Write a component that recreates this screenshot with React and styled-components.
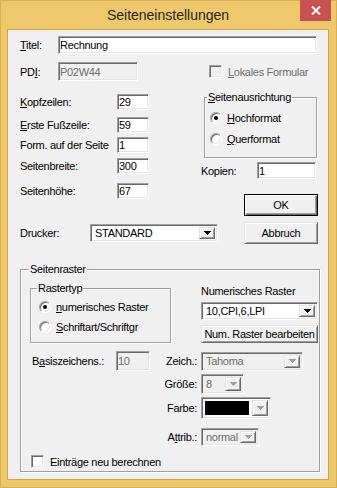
import React from "react";
import styled, { createGlobalStyle, css } from "styled-components";

const GlobalStyle = createGlobalStyle`
  html, body {
    margin: 0;
    padding: 0;
    background: #ffffff;
  }
  body {
    font-family: "Liberation Sans", Arial, sans-serif;
    font-size: 11px;
  }
`;

// classic 3D edges
const sunken = css`
  box-sizing: border-box;
  border: 1px solid;
  border-color: #a0a0a0 #ffffff #ffffff #a0a0a0;
  box-shadow: inset 1px 1px 0 #696969, inset -1px -1px 0 #e3e3e3;
`;

const raised = css`
  box-sizing: border-box;
  border: 1px solid;
  border-color: #e3e3e3 #696969 #696969 #e3e3e3;
  box-shadow: inset 1px 1px 0 #ffffff, inset -1px -1px 0 #a0a0a0;
`;

const Frame = styled.div`
  width: 337px;
  height: 488px;
  box-sizing: border-box;
  background: #efc86b;
  border: 1px solid #d7b055;
  padding: 0 7px 7px 6px;
  display: flex;
  flex-direction: column;
`;

const TitleBar = styled.div`
  position: relative;
  flex: none;
  height: 28px;
  display: flex;
  align-items: center;
  justify-content: center;
  font-size: 14px;
  color: #262626;
`;

const CloseButton = styled.div`
  position: absolute;
  top: -1px;
  right: -2px;
  width: 31px;
  height: 21px;
  background: #c75050;
  display: flex;
  align-items: center;
  justify-content: center;
`;

const Client = styled.div`
  flex: 1;
  box-sizing: border-box;
  border: 1px solid #cda44c;
  background: #f0f0f0;
  padding: 6px 11px 0 12px;
  display: flex;
  flex-direction: column;
  color: #000;
  letter-spacing: -0.3px;
  overflow: hidden;
`;

const Row = styled.div`
  display: flex;
  align-items: center;
  height: ${(p) => p.$h || 16}px;
  margin-top: ${(p) => p.$mt || 0}px;
  margin-left: ${(p) => p.$ml || 0}px;
`;

const Label = styled.span`
  flex: none;
  width: ${(p) => (p.$w ? `${p.$w}px` : "auto")};
  white-space: nowrap;
  color: ${(p) => (p.$disabled ? "#6d6d6d" : "#000")};
  margin-left: ${(p) => p.$ml || 0}px;
`;

const Field = styled.input`
  ${sunken};
  flex: ${(p) => (p.$grow ? 1 : "none")};
  width: ${(p) => (p.$w ? `${p.$w}px` : "auto")};
  height: ${(p) => p.$h || 16}px;
  min-width: 0;
  margin: 0;
  padding: 0 0 0 1px;
  font: inherit;
  letter-spacing: inherit;
  color: #000;
  background: #ffffff;
  outline: none;

  &:disabled {
    color: #6d6d6d;
    background: #f0f0f0;
  }
`;

const Combo = styled.div`
  ${sunken};
  flex: none;
  width: ${(p) => p.$w}px;
  height: ${(p) => p.$h || 18}px;
  padding: 2px;
  display: flex;
  align-items: stretch;
  background: ${(p) => (p.$disabled ? "#f0f0f0" : "#ffffff")};
  color: ${(p) => (p.$disabled ? "#6d6d6d" : "#000")};
`;

const ComboText = styled.span`
  flex: 1;
  display: flex;
  align-items: center;
  padding-left: 2px;
  white-space: nowrap;
  overflow: hidden;
`;

const Swatch = styled.span`
  flex: 1;
  margin: 1px 3px 1px 1px;
  background: ${(p) => p.$color};
`;

const DropButton = styled.span`
  ${raised};
  flex: none;
  width: 16px;
  background: #f0f0f0;
  display: flex;
  align-items: center;
  justify-content: center;
`;

const Arrow = ({ disabled }) => (
  <svg width="7" height="4" viewBox="0 0 7 4" shapeRendering="crispEdges">
    <path
      d="M0 0h7v1H0zM1 1h5v1H1zM2 2h3v1H2zM3 3h1v1H3z"
      fill={disabled ? "#a0a0a0" : "#000"}
    />
  </svg>
);

const PushButton = styled.button`
  ${raised};
  flex: none;
  width: ${(p) => p.$w}px;
  height: ${(p) => p.$h || 22}px;
  margin: ${(p) => p.$mt || 0}px 0 0 ${(p) => p.$ml || 0}px;
  padding: 0;
  font: inherit;
  letter-spacing: inherit;
  white-space: nowrap;
  color: #000;
  background: #f0f0f0;

  ${(p) =>
    p.$default &&
    css`
      border-color: #000;
      box-shadow: inset 1px 1px 0 #ffffff, inset -1px -1px 0 #696969,
        inset -2px -2px 0 #a0a0a0;
    `}
`;

const CheckBox = styled.span`
  ${sunken};
  flex: none;
  width: 13px;
  height: 13px;
  background: ${(p) => (p.$disabled ? "#f0f0f0" : "#ffffff")};
`;

const RadioCircle = styled.span`
  ${sunken};
  flex: none;
  position: relative;
  width: 12px;
  height: 12px;
  border-radius: 50%;
  background: #ffffff;

  &::after {
    content: "";
    display: ${(p) => (p.$checked ? "block" : "none")};
    position: absolute;
    left: 3px;
    top: 3px;
    width: 4px;
    height: 4px;
    border-radius: 50%;
    background: #000;
  }
`;

const RadioRow = styled.div`
  display: flex;
  align-items: center;
  gap: 5px;
  height: 14px;
  margin-top: ${(p) => p.$mt || 0}px;
  white-space: nowrap;
`;

const Group = styled.div`
  position: relative;
  box-sizing: border-box;
  flex: none;
  width: ${(p) => p.$w}px;
  height: ${(p) => p.$h}px;
  margin: ${(p) => p.$mt || 0}px 0 0 ${(p) => p.$ml || 0}px;
  padding: ${(p) => p.$pad || "0"};
  border: 1px solid #a0a0a0;
  box-shadow: inset 1px 1px 0 #ffffff, 1px 1px 0 #ffffff;
`;

const GroupTitle = styled.span`
  position: absolute;
  top: -7px;
  left: ${(p) => p.$left}px;
  padding: 0 1px;
  line-height: 13px;
  background: #f0f0f0;
  white-space: nowrap;
`;

const MidGrid = styled.div`
  display: grid;
  grid-template-columns: 181px 1fr;
  margin-top: 9px;
`;

const Column = styled.div`
  display: flex;
  flex-direction: column;
  padding-top: ${(p) => p.$pt || 0}px;
`;

const TopRaster = styled.div`
  display: flex;
  margin-top: 15px;
`;

const RasterStack = styled.div`
  display: flex;
  flex-direction: column;
  margin-left: 30px;
`;

const StackLabel = styled.span`
  line-height: 13px;
  height: 13px;
  margin-bottom: 4px;
`;

const FontRow = styled.div`
  display: grid;
  grid-template-columns: 176px auto;
  column-gap: 4px;
  align-items: center;
  height: ${(p) => p.$h}px;
  margin-top: ${(p) => p.$mt}px;
`;

const FontLeft = styled.div`
  display: flex;
  align-items: center;
  padding-left: 11px;
`;

const RightLabel = styled.span`
  margin-left: auto;
  white-space: nowrap;
`;

const ComboBox = ({ w, h, value, disabled }) => (
  <Combo $w={w} $h={h} $disabled={disabled}>
    <ComboText>{value}</ComboText>
    <DropButton>
      <Arrow disabled={disabled} />
    </DropButton>
  </Combo>
);

const leftRows = [
  { label: <><u>K</u>opfzeilen:</>, value: "29", mt: 0 },
  { label: <><u>E</u>rste Fußzeile:</>, value: "59", mt: 7 },
  { label: "Form. auf der Seite", value: "1", mt: 4 },
  { label: "Seitenbreite:", value: "300", mt: 5 },
  { label: "Seitenhöhe:", value: "67", mt: 9 },
];

export default function App() {
  return (
    <>
      <GlobalStyle />
      <Frame>
        <TitleBar>
          Seiteneinstellungen
          <CloseButton>
            <svg width="10" height="9" viewBox="0 0 10 9">
              <path d="M1 0.5L9 8.5M9 0.5L1 8.5" stroke="#fff" strokeWidth="2" />
            </svg>
          </CloseButton>
        </TitleBar>

        <Client>
          <Row $h={18}>
            <Label $w={38}>
              <u>T</u>itel:
            </Label>
            <Field $grow $h={18} defaultValue="Rechnung" readOnly />
          </Row>

          <Row $h={19} $mt={8}>
            <Label $w={38}>
              PD<u>I</u>:
            </Label>
            <Field $w={80} $h={19} defaultValue="P02W44" disabled />
            <CheckBox $disabled style={{ marginLeft: 71 }} />
            <Label $disabled $ml={6}>
              <u>L</u>okales Formular
            </Label>
          </Row>

          <MidGrid>
            <Column $pt={4}>
              {leftRows.map((r, i) => (
                <Row key={i} $mt={r.mt}>
                  <Label $w={97}>{r.label}</Label>
                  <Field $w={32} defaultValue={r.value} readOnly />
                </Row>
              ))}
              <Row $h={18} $mt={25}>
                <Label $w={70}>Drucker:</Label>
                <ComboBox w={128} h={18} value="STANDARD" />
              </Row>
            </Column>

            <Column>
              <Group $w={113} $h={61} $mt={7} $ml={3} $pad="13px 0 0 5px">
                <GroupTitle $left={2}>
                  <u>S</u>eitenausrichtung
                </GroupTitle>
                <RadioRow>
                  <RadioCircle $checked />
                  <span>
                    <u>H</u>ochformat
                  </span>
                </RadioRow>
                <RadioRow $mt={7}>
                  <RadioCircle />
                  <span>
                    <u>Q</u>uerformat
                  </span>
                </RadioRow>
              </Group>
              <Row $h={17} $mt={4}>
                <Label $w={56}>Kopien:</Label>
                <Field $w={59} $h={17} defaultValue="1" readOnly />
              </Row>
              <PushButton $default $w={74} $mt={15} $ml={43}>
                OK
              </PushButton>
              <PushButton $w={74} $mt={6} $ml={43}>
                Abbruch
              </PushButton>
            </Column>
          </MidGrid>

          <Group $w={300} $h={203} $mt={25}>
            <GroupTitle $left={8}>Seitenraster</GroupTitle>

            <TopRaster>
              <Group $w={141} $h={55} $mt={3} $ml={9} $pad="11px 0 0 8px">
                <GroupTitle $left={6}>Rastertyp</GroupTitle>
                <RadioRow>
                  <RadioCircle $checked />
                  <span>
                    <u>n</u>umerisches Raster
                  </span>
                </RadioRow>
                <RadioRow $mt={6}>
                  <RadioCircle />
                  <span>
                    <u>S</u>chriftart/Schriftgr
                  </span>
                </RadioRow>
              </Group>
              <RasterStack>
                <StackLabel>Numerisches Raster</StackLabel>
                <ComboBox w={117} h={18} value="10,CPI,6,LPI" />
                <PushButton $w={117} $h={18} $mt={5}>
                  Num. Raster bearbeiten
                </PushButton>
              </RasterStack>
            </TopRaster>

            <FontRow $h={20} $mt={8}>
              <FontLeft>
                <Label $w={84}>
                  B<u>a</u>siszeichens.:
                </Label>
                <Field $w={34} $h={20} defaultValue="10" disabled />
                <RightLabel>Zeich.:</RightLabel>
              </FontLeft>
              <ComboBox w={102} h={19} value="Tahoma" disabled />
            </FontRow>

            <FontRow $h={20} $mt={3}>
              <FontLeft>
                <RightLabel>Größe:</RightLabel>
              </FontLeft>
              <ComboBox w={43} h={20} value="8" disabled />
            </FontRow>

            <FontRow $h={22} $mt={3}>
              <FontLeft>
                <RightLabel>Farbe:</RightLabel>
              </FontLeft>
              <Combo $w={70} $h={22}>
                <Swatch $color="#000" />
                <DropButton>
                  <Arrow disabled />
                </DropButton>
              </Combo>
            </FontRow>

            <FontRow $h={18} $mt={9}>
              <FontLeft>
                <RightLabel>
                  A<u>t</u>trib.:
                </RightLabel>
              </FontLeft>
              <ComboBox w={58} h={18} value="normal" disabled />
            </FontRow>

            <Row $h={13} $mt={9} $ml={10}>
              <CheckBox />
              <Label $ml={6}>Einträge neu berechnen</Label>
            </Row>
          </Group>
        </Client>
      </Frame>
    </>
  );
}
